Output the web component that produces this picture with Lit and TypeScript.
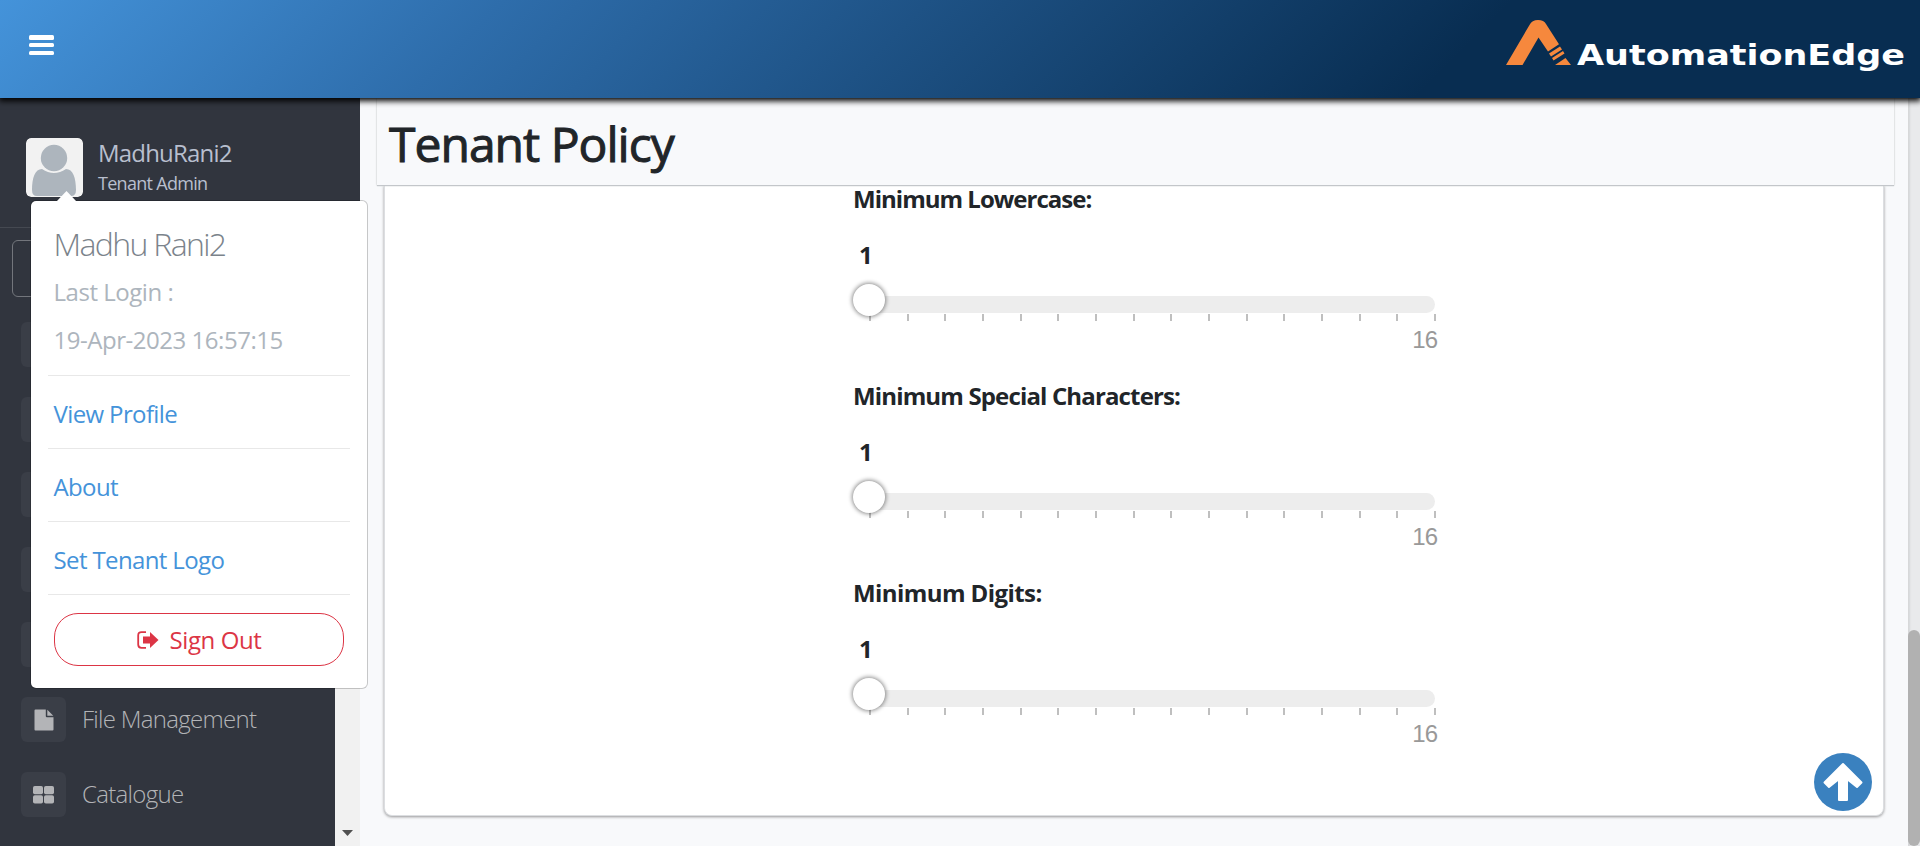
import { LitElement, html, css, svg } from "lit";
import { customElement, property } from "lit/decorators.js";

@customElement("policy-slider")
class PolicySlider extends LitElement {
  @property() label = "";
  @property({ type: Number }) value = 1;
  @property({ type: Number }) max = 16;
  static styles = css`
    :host { display: block; height: 197px; width: 590px; }
    .label { font-size: 24px; font-weight: 700; line-height: 36px; height: 56px; margin-top: -4px; white-space: nowrap; letter-spacing: var(--tracking, -0.85px); }
    .value { font-size: 24px; font-weight: 700; line-height: 36px; height: 53px; padding-left: 6px; }
    .row { display: flex; height: 23px; align-items: flex-end; }
    .track { flex: 1; margin: 0 8px 0 1px; height: 17px; border-radius: 9px; background: #ededed; display: flex; }
    .knob { position: relative; box-sizing: border-box; flex: none; width: 32px; height: 32px; margin: -12px 0 0 -1px; border-radius: 50%; background: #fff; box-shadow: 0 0 4px 1px #00000073; }
    .ticks { display: flex; justify-content: space-between; height: 7px; margin: 1px 7px 0 16px; }
    .tick { width: 2px; background: #bfbfbf; }
    .max { font: 24px/28px "Liberation Sans", Arial, sans-serif; color: #999; text-align: right; margin: 5px 6px 0 0; letter-spacing: -1px; }
  `;
  render() {
    return html`
      <div class="label">${this.label}</div>
      <div class="value">${this.value}</div>
      <div class="row"><div class="track"><div class="knob"></div></div></div>
      <div class="ticks">${Array.from({ length: this.max }, () => html`<i class="tick"></i>`)}</div>
      <div class="max">${this.max}</div>`;
  }
}

const fileIcon = svg`<svg width="20" height="22" viewBox="0 0 20 22"><path fill="#b3b4b7" d="M1.500 .5h10.300v6.800q0 1 1 1h6.700v12.300q0 .9-.9 .9h-17.200q-.9 0-.9-.9V1.400q0-.9 1-.9zM13.300 .8l6 6h-6z"/></svg>`;
const gridIcon = svg`<svg width="21" height="18" viewBox="0 0 21 18"><g fill="#b3b4b7"><rect width="10" height="8.300" rx="1.800"/><rect x="11" width="10" height="8.300" rx="1.800"/><rect y="9.300" width="10" height="8.300" rx="1.800"/><rect x="11" y="9.300" width="10" height="8.300" rx="1.800"/></g></svg>`;

@customElement("app-root")
class AppRoot extends LitElement {
  static styles = css`
    :host { display: flex; flex-direction: column; position: relative; width: 1920px; height: 846px; overflow: hidden; background: #f8f9fb; color: #212529; font-family: "Open Sans", "Noto Sans", sans-serif; }
    .header { position: relative; z-index: 3; flex: none; height: 98px; box-sizing: border-box; display: flex; justify-content: space-between; background: linear-gradient(135deg, #4493da 0%, #2e6dab 25%, #082d51 75%); box-shadow: 0 2px 6px 1px #000; }
    .burger { margin: 35px 0 0 29px; width: 25px; height: 20px; display: flex; flex-direction: column; justify-content: space-between; }
    .burger i { height: 4.500px; border-radius: 1.500px; background: #fff; }
    .logo { width: 410px; height: 80px; margin-right: 10px; }
    .logo text { font-family: "DejaVu Sans", sans-serif; font-weight: 700; font-size: 29px; fill: #fff; }
    .body { flex: 1; display: flex; min-height: 0; }
    .side { width: 360px; flex: none; background: #31353e; display: flex; flex-direction: column; overflow: hidden; }
    .user { flex: none; height: 130px; box-sizing: border-box; border-bottom: 1px solid #454951; padding: 40px 0 0 26px; display: flex; gap: 15px; color: #b8bfce; }
    .avatar { width: 57px; height: 59px; border-radius: 5px; }
    .name { font-size: 24px; line-height: 28px; letter-spacing: -0.8px; margin-top: 1px; white-space: nowrap; }
    .role { font-size: 18px; line-height: 24px; letter-spacing: -0.7px; margin-top: 4px; white-space: nowrap; }
    .nav { flex: 1; display: flex; min-height: 0; }
    .list { width: 335px; overflow: hidden; }
    .search { box-sizing: border-box; height: 57px; margin: 12px 12px 0; border: 1px solid #73767c; border-radius: 6px; }
    .items { padding: 25px 0 0 21px; }
    .item { height: 75px; display: flex; gap: 16px; font-size: 24px; font-weight: 300; color: #b3b4b7; white-space: nowrap; letter-spacing: -0.7px; }
    .item b { width: 45px; height: 45px; border-radius: 6px; background: #3a3e47; display: flex; align-items: center; justify-content: center; }
    .item span { line-height: 43px; }
    .bar { width: 25px; background: #f1f1f1; display: flex; align-items: flex-end; justify-content: center; }
    .bar svg { margin-bottom: 10px; }
    .main { flex: 1; display: flex; flex-direction: column; padding: 0 14px 0 17px; min-width: 0; }
    .title { position: relative; z-index: 1; box-sizing: border-box; height: 87px; flex: none; padding: 10px 0 0 12px; background: #f8f9fb; box-shadow: 0 1px 1px #c3c6ca, 0 0 2px #ccc; font-size: 48px; font-weight: 400; line-height: 72px; letter-spacing: -0.980px; -webkit-text-stroke: 1px #212529; }
    .card { box-sizing: border-box; height: 631px; margin: 0 10px 0 7px; border: 1px solid #dcdee1; border-top: 0; border-radius: 0 0 8px 8px; background: #fff; box-shadow: 0 1px 3px #0006; padding-left: 468px; display: flex; flex-direction: column; }
    .tight { --tracking: -0.98px; }
    .loose { --tracking: -0.58px; }
    .strip { width: 12px; background: #e9eaec; box-shadow: inset 2px 0 2px #d6d7d9; display: flex; align-items: flex-end; }
    .thumb { width: 12px; height: 216px; border-radius: 6px; background: #b1b1b1; }
    .menu { position: absolute; z-index: 4; left: 30px; top: 200px; width: 338px; height: 489px; box-sizing: border-box; background: #fff; background-clip: padding-box; border: 1px solid rgba(0, 0, 0, 0.2); border-radius: 6px; padding: 26px 17px 0; font-size: 24px; display: flex; flex-direction: column; }
    .arrow { position: absolute; left: 25px; top: -10px; }
    .menu div { padding-left: 5.500px; white-space: nowrap; }
    .full { font-size: 32px; line-height: 33px; font-weight: 300; color: #7b838b; letter-spacing: -1.650px; }
    .muted { color: #adb5bd; line-height: 48px; letter-spacing: -0.47px; }
    .first { margin-top: 8px; }
    .date { margin-bottom: 11px; }
    .link { height: 73px; box-sizing: border-box; border-top: 1px solid #e8e8e8; line-height: 75px; color: #4493da; letter-spacing: -0.62px; }
    .last { height: 19px; border-top: 1px solid #e8e8e8; box-sizing: border-box; flex: none; }
    .menu .out { margin: 0 6px; padding: 0; height: 53px; box-sizing: border-box; border: 1px solid #dc3545; border-radius: 24px; color: #dc3545; display: flex; align-items: center; justify-content: center; gap: 11px; letter-spacing: -0.4px; }
    .up { position: absolute; left: 1814px; top: 753px; z-index: 2; }
  `;
  render() {
    const items = ["", "", "", "", "", "File Management", "Catalogue"];
    return html`
      <div class="header">
        <div class="burger"><i></i><i></i><i></i></div>
        <svg class="logo" viewBox="1500 0 410 80">
          <path fill="#f6883d" d="M1506 65 1529.500 25Q1532 20 1538 20T1546 24L1559 44.300 1548 51.500 1538.500 37.500 1522.500 65zM1549 53.500 1560 46.500 1562 49.500 1551 56.500zM1552 58 1563 51 1564.500 53.500 1553.500 60.500zM1555 65 1565.500 58 1571 65z"/>
          <text x="1577" y="64.500" textLength="328" lengthAdjust="spacingAndGlyphs">AutomationEdge</text>
        </svg>
      </div>
      <div class="body">
        <div class="side">
          <div class="user">
            <svg class="avatar" viewBox="0 0 57 59"><rect width="57" height="59" rx="5" fill="#f2f2f2"/><g fill="#adb5bd"><circle cx="28" cy="20" r="13.200"/><path d="M16 31Q28 39 40 31C47 31 50 40 50 52Q50 58 45 58H11Q6 58 6 52C6 40 9 31 16 31z"/></g></svg>
            <div><div class="name">MadhuRani2</div><div class="role">Tenant Admin</div></div>
          </div>
          <div class="nav">
            <div class="list">
              <div class="search"></div>
              <div class="items">${items.map((t, i) => html`<div class="item"><b>${i === 5 ? fileIcon : i === 6 ? gridIcon : ""}</b><span>${t}</span></div>`)}</div>
            </div>
            <div class="bar"><svg width="11" height="6"><path d="M0 0H11L5.500 6z" fill="#505050"/></svg></div>
          </div>
        </div>
        <div class="main">
          <div class="title">Tenant Policy</div>
          <div class="card">
            <policy-slider class="tight" label="Minimum Lowercase:"></policy-slider>
            <policy-slider label="Minimum Special Characters:"></policy-slider>
            <policy-slider class="loose" label="Minimum Digits:"></policy-slider>
          </div>
        </div>
        <div class="strip"><div class="thumb"></div></div>
      </div>
      <div class="menu">
        <svg class="arrow" width="21" height="11"><path d="M0 11 10.500 0 21 11z" fill="#fff"/></svg>
        <div class="full">Madhu Rani2</div>
        <div class="muted first">Last Login :</div>
        <div class="muted date">19-Apr-2023 16:57:15</div>
        <div class="link">View Profile</div>
        <div class="link">About</div>
        <div class="link">Set Tenant Logo</div>
        <div class="last"></div>
        <div class="out"><svg width="22" height="18" viewBox="0 0 22 18"><path d="M9 1.100H4.500Q1.200 1.100 1.200 4.400V13.600Q1.200 16.900 4.500 16.900H9" fill="none" stroke="#dc3545" stroke-width="1.800"/><path d="M6 5.500H13V1L21.500 9 13 17V12.500H6z" fill="#dc3545"/></svg><span>Sign Out</span></div>
      </div>
      <svg class="up" width="58" height="58" viewBox="0 0 58 58"><circle cx="29" cy="29" r="29" fill="#3a81bf"/><path fill="#fff" stroke="#fff" stroke-width="2" stroke-linejoin="round" d="M29 11 47.500 29.500 43 34 33 26V47H25V26L15 34 10.500 29.500z"/></svg>`;
  }
}
